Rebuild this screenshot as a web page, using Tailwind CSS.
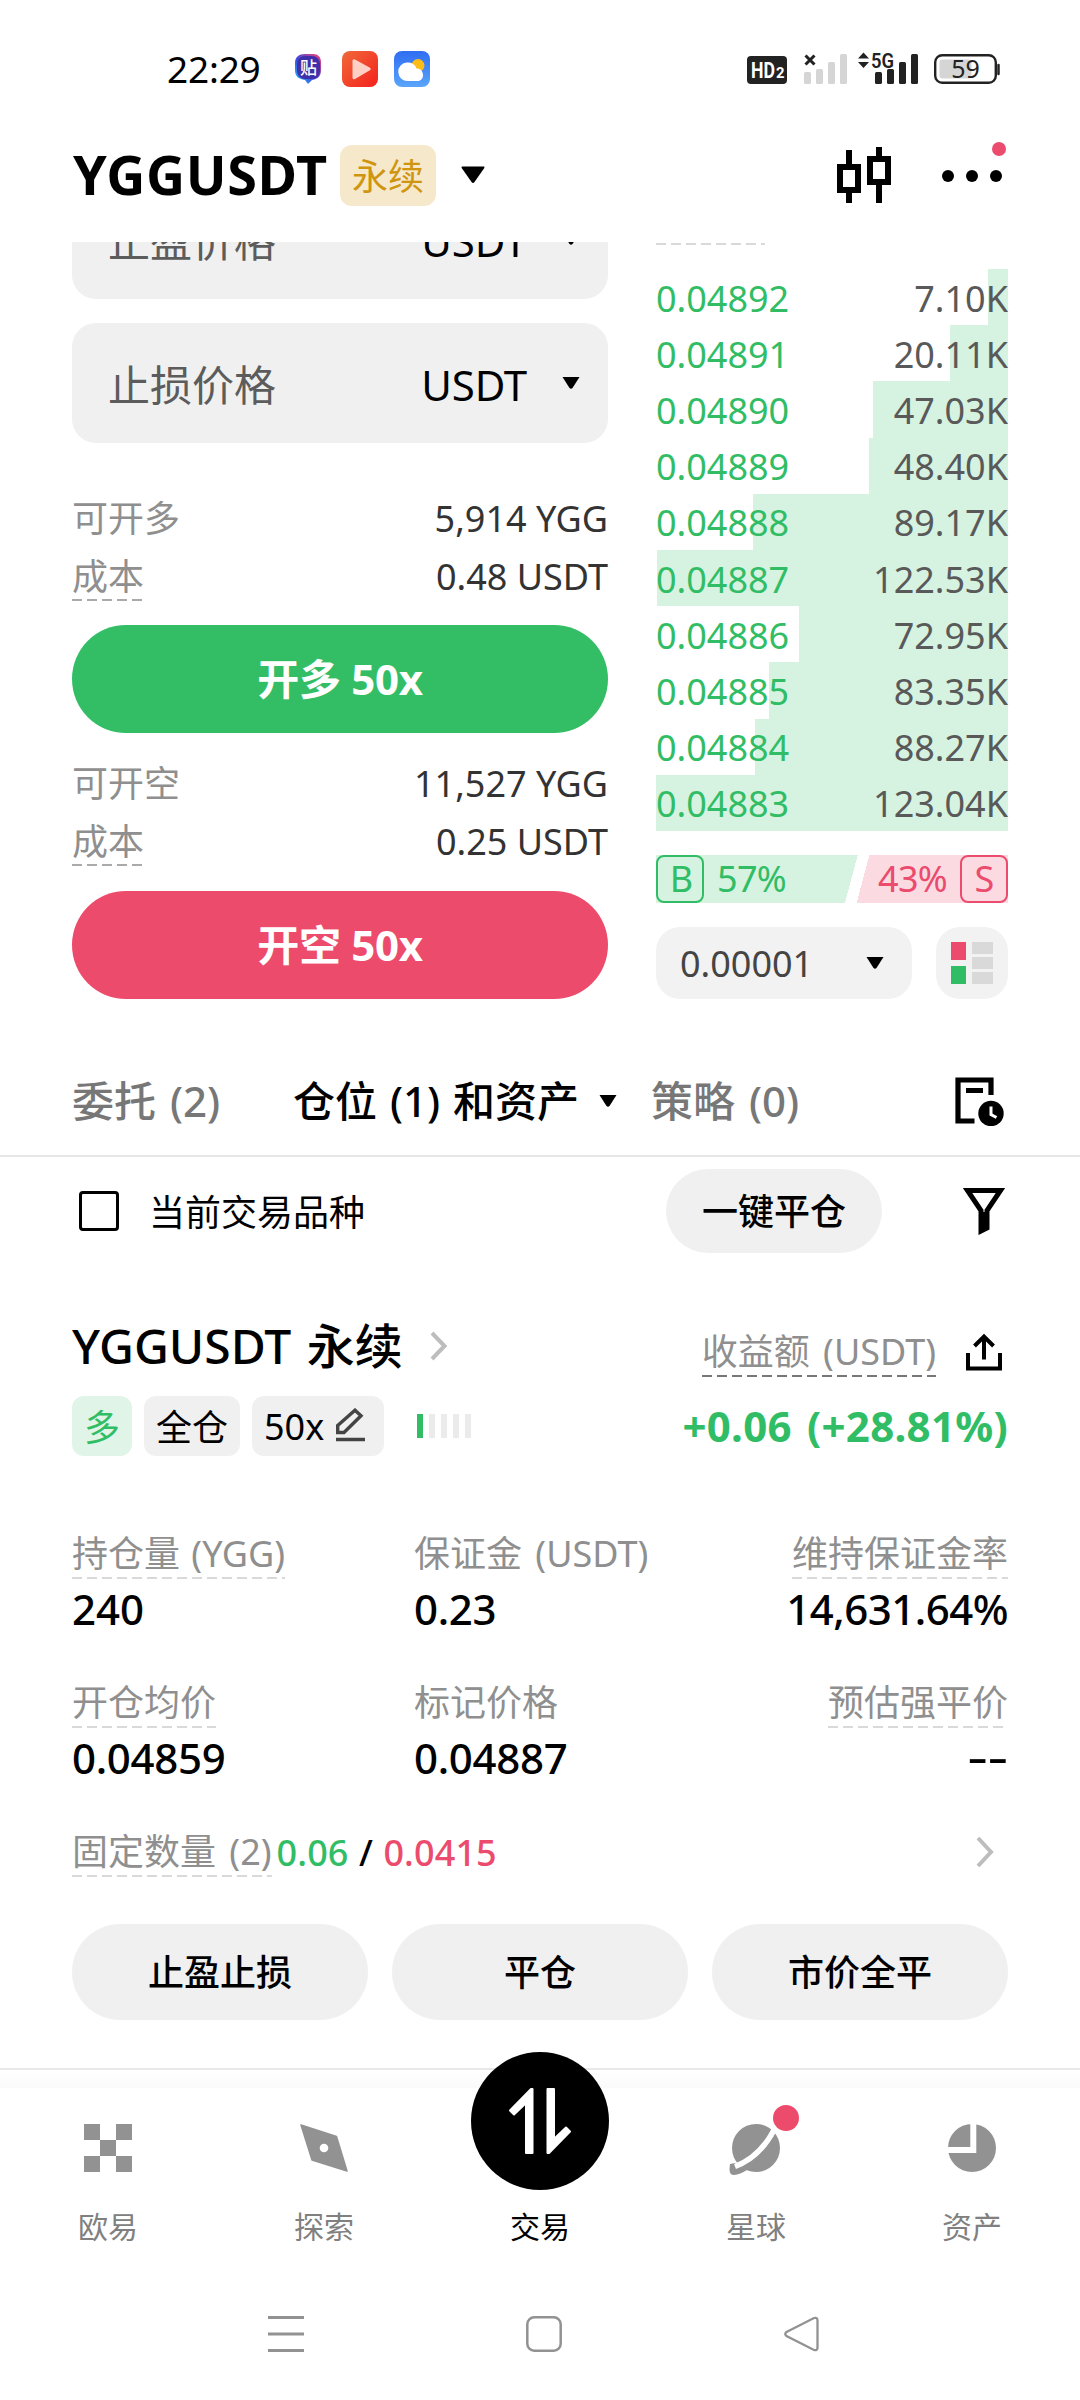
<!DOCTYPE html>
<html lang="zh-CN">
<head>
<meta charset="utf-8">
<title>YGGUSDT 永续</title>
<script src="https://cdn.jsdelivr.net/npm/@tailwindcss/browser@4"></script>
</head>
<body class="bg-white">
<div class="relative flex h-[2400px] w-[1080px] flex-col overflow-hidden bg-white font-['Noto_Sans','Noto_Sans_CJK_SC',sans-serif] text-[36px] leading-[50px] text-black">

  <!-- Status bar -->
  <header class="flex h-[108px] shrink-0 items-center pt-[30px] pr-[79px] pl-[167px]">
    <span class="w-[127px] text-[37px] tracking-[-0.2px]">22:29</span>
    <svg class="h-9 w-[138px]" viewBox="0 0 138 36">
      <defs>
        <linearGradient id="play" x1="0" y1="0" x2="1" y2="1"><stop offset="0" stop-color="#f06a3a"/><stop offset="1" stop-color="#f4201c"/></linearGradient>
        <linearGradient id="sky" x1="0" y1="0" x2="0" y2="1"><stop offset="0" stop-color="#2f6df2"/><stop offset="1" stop-color="#5aa5fb"/></linearGradient>
        <linearGradient id="tie" x1="0" y1="1" x2="1" y2="0"><stop offset="0" stop-color="#22c8ff"/><stop offset=".45" stop-color="#3b4be0"/><stop offset="1" stop-color="#ff3d6e"/></linearGradient>
      </defs>
      <path d="M11 3h8c5 0 8 3 8 8v8c0 6-3 9-9 10l-4 4-3-4C4 28 1 25 1 19v-7c0-6 4-9 10-9z" fill="url(#tie)"/>
      <rect x="3" y="5" width="23" height="23" rx="8" fill="#3f2fa8"/>
      <text x="14.500" y="23" font-size="17" font-weight="500" text-anchor="middle" fill="#fff" font-family="Noto Sans CJK SC, sans-serif">贴</text>
      <rect x="48" width="36" height="36" rx="8" fill="url(#play)"/>
      <path d="M58.500 9.500q.5-2 2.500-1l14.500 8q2.500 1.500 0 3L61 28q-2 1-2.500-1z" fill="#ffd0c4"/>
      <rect x="100" width="36" height="36" rx="8" fill="url(#sky)"/>
      <circle cx="124" cy="14.500" r="6.500" fill="#fdbd18"/>
      <path d="M114 30a9 9 0 0 1-1-18.500 9 9 0 0 1 9.500 6 6.500 6.500 0 0 1 2.500 12.500z" fill="#fff"/>
    </svg>
    <div class="grow"></div>
    <svg class="h-9 w-[255px]" viewBox="0 0 255 36" font-family="Roboto, sans-serif" fill="#222">
      <rect x="1" y="5" width="40" height="28" rx="4"/>
      <text x="5" y="27" font-size="22" font-weight="700" fill="#fff" textLength="24" lengthAdjust="spacingAndGlyphs">HD</text>
      <text x="30" y="27" font-size="14" font-weight="700" fill="#fff" textLength="8.500" lengthAdjust="spacingAndGlyphs">2</text>
      <path d="M59.500 4.500l9 9m0-9l-9 9" stroke="#222" stroke-width="3" fill="none"/>
      <g fill="#d5d5d5"><rect x="58" y="21" width="7" height="12" rx="1.500"/><rect x="70" y="18" width="7" height="15" rx="1.500"/><rect x="82" y="11" width="7" height="22" rx="1.500"/><rect x="94" y="3" width="7" height="30" rx="1.500"/></g>
      <path d="M112 7.500l5.500-6 5.500 6zM112 11l5.500 6 5.500-6z"/>
      <text x="125" y="16.500" font-size="21" font-weight="600" textLength="23" lengthAdjust="spacingAndGlyphs">5G</text>
      <rect x="129" y="21" width="7" height="12" rx="1.500"/><rect x="141" y="18" width="7" height="15" rx="1.500"/><rect x="153" y="11" width="7" height="22" rx="1.500"/><rect x="165" y="3" width="7" height="30" rx="1.500"/>
      <rect x="193.500" y="8.500" width="32" height="19" rx="3" fill="#d5d5d5"/>
      <rect x="189.200" y="4.200" width="60.600" height="27.600" rx="7" fill="none" stroke="#222" stroke-width="2.400"/>
      <path d="M252.500 14v9" stroke="#222" stroke-width="2.500" stroke-linecap="round"/>
      <text x="219.500" y="27" font-size="25" text-anchor="middle" font-family="Noto Sans, sans-serif">59</text>
    </svg>
  </header>

  <!-- Instrument header -->
  <div class="flex h-[134px] shrink-0 items-center pr-[71px] pl-[73px]">
    <h1 class="mb-[3px] w-[267px] text-[54px] leading-[60px] font-bold tracking-[0.600px] whitespace-nowrap">YGGUSDT</h1>
    <span class="flex h-[61px] w-24 items-center justify-center rounded-xl bg-[#f6e8cb] pt-[3px] text-[#cf950f]">永续</span>
    <svg class="ml-[25px] h-[18px] w-6" viewBox="0 0 24 18"><path d="M1.500.5h21q1.500 0 .8 1.400L13.500 16q-1.500 2-3 0L.7 1.900Q0 .5 1.500.5z"/></svg>
    <div class="grow"></div>
    <svg class="mb-0.5 h-[58px] w-14" viewBox="0 0 56 58"><g fill="none" stroke="#000" stroke-width="6"><rect x="4" y="22" width="18" height="23"/><path d="M13 5v17M13 45v13"/><rect x="34" y="14" width="18" height="23"/><path d="M43 2v12M43 37v21"/></g></svg>
    <svg class="ml-[49px] h-[68px] w-[68px]" viewBox="0 0 68 68"><circle cx="7" cy="35" r="6"/><circle cx="31" cy="35" r="6"/><circle cx="55" cy="35" r="6"/><circle cx="58" cy="8" r="7" fill="#eb4b6d"/></svg>
  </div>

  <!-- Order form and order book -->
  <section class="flex h-[803px] shrink-0 justify-between overflow-hidden px-[72px]">
    <div class="-mt-[63px] flex w-[536px] flex-col">
      <div class="flex h-[120px] shrink-0 items-center rounded-3xl bg-[#f0f0f0] pt-[3px] pr-7 pl-9 text-[42px]">
        <span class="grow text-[#5c5c5c]">止盈价格</span><span class="tracking-[-0.200px]">USDT</span>
        <svg class="mb-[3px] ml-[35px] h-3 w-[18px]" viewBox="0 0 18 12"><path d="M.5 0h17l-7 11q-1.500 1.500-3 0z"/></svg>
      </div>
      <div class="mt-6 flex h-[120px] shrink-0 items-center rounded-3xl bg-[#f0f0f0] pt-[3px] pr-7 pl-9 text-[42px]">
        <span class="grow text-[#5c5c5c]">止损价格</span><span class="tracking-[-0.200px]">USDT</span>
        <svg class="mb-[3px] ml-[35px] h-3 w-[18px]" viewBox="0 0 18 12"><path d="M.5 0h17l-7 11q-1.500 1.500-3 0z"/></svg>
      </div>
      <div class="mt-[46px] flex h-[58px] items-center justify-between pt-0.5"><span class="text-[#8f8f8f]">可开多</span><span class="text-[#333]">5,914 YGG</span></div>
      <div class="flex h-[58px] items-center justify-between pt-0.5"><span class="bg-[repeating-linear-gradient(to_right,#aaa_0_10px,transparent_10px_15px)] bg-[length:100%_2px] bg-[position:0_47px] bg-no-repeat text-[#8f8f8f]">成本</span><span class="text-[#333]">0.48 USDT</span></div>
      <button class="mt-5 h-[108px] shrink-0 rounded-full bg-[#33be66] text-[42px] font-bold tracking-[-0.300px] text-white">开多 50x</button>
      <div class="mt-[21px] flex h-[58px] items-center justify-between pt-0.5"><span class="text-[#8f8f8f]">可开空</span><span class="text-[#333]">11,527 YGG</span></div>
      <div class="flex h-[58px] items-center justify-between pt-0.5"><span class="bg-[repeating-linear-gradient(to_right,#aaa_0_10px,transparent_10px_15px)] bg-[length:100%_2px] bg-[position:0_47px] bg-no-repeat text-[#8f8f8f]">成本</span><span class="text-[#333]">0.25 USDT</span></div>
      <button class="mt-[21px] h-[108px] shrink-0 rounded-full bg-[#ed4b6b] text-[42px] font-bold tracking-[-0.300px] text-white">开空 50x</button>
    </div>

    <div class="flex w-[352px] flex-col">
      <div class="mt-[1px] h-[2px] w-[109px] bg-[repeating-linear-gradient(to_right,#d9d9d9_0_10px,transparent_10px_15px)]"></div>
      <div id="book" class="mt-6 grid h-[562px] grid-rows-10"></div>
      <div class="mt-6 flex h-12 items-center justify-between bg-[linear-gradient(105deg,#d6f2e1_0_55.300%,white_55.300%_58.500%,#fbdae1_58.500%)]">
        <div class="flex items-center tracking-[-0.700px] text-[#31bd65]"><span class="mr-[13px] flex size-12 items-center justify-center rounded-lg border-[2.500px] border-[#31bd65] pl-0.5">B</span>57%</div>
        <div class="flex items-center tracking-[-0.700px] text-[#eb4b6d]">43%<span class="ml-[13px] flex size-12 items-center justify-center rounded-lg border-[2.500px] border-[#eb4b6d]">S</span></div>
      </div>
      <div class="mt-6 flex justify-between">
        <div class="flex h-[72px] w-64 items-center justify-between rounded-3xl bg-[#f2f2f2] pt-0.5 pr-7 pl-6 text-[#444]">0.00001
          <svg class="mb-0.5 h-3 w-[18px]" viewBox="0 0 18 12"><path d="M.5 0h17l-7 11q-1.500 1.500-3 0z" fill="#000"/></svg>
        </div>
        <div class="flex size-[72px] items-center justify-center rounded-3xl bg-[#f2f2f2]">
          <svg class="h-[42px] w-[42px]" viewBox="0 0 42 42"><path d="M0 0h15v18H0z" fill="#eb4b6d"/><path d="M0 24h15v18H0z" fill="#31bd65"/><path d="M21 0h21v12H21zM21 15h21v12H21zM21 30h21v12H21z" fill="#d9d9d9"/></svg>
        </div>
      </div>
    </div>
  </section>

  <!-- Tabs -->
  <nav class="flex h-28 shrink-0 items-center border-b-2 border-[#e6e6e6] pt-0.5 pr-[76px] pl-[72px] text-[42px] font-medium whitespace-nowrap text-[#777]">
    <span class="w-[221px] [word-spacing:3px]">委托 (2)</span>
    <span class="w-[306px] text-black [word-spacing:2px]">仓位 (1) 和资产</span>
    <svg class="h-3 w-[18px] shrink-0" viewBox="0 0 18 12"><path d="M.5 0h17l-7 11q-1.500 1.500-3 0z"/></svg>
    <span class="ml-[34px] grow [word-spacing:3px]">策略 (0)</span>
    <svg class="h-[49px] w-[49px] shrink-0" viewBox="0 0 49 49"><path d="M19.500 44H3V3h33v15" fill="none" stroke="#000" stroke-width="5.200"/><path d="M11 13.500h17" stroke="#000" stroke-width="5"/><circle cx="36" cy="36.500" r="12.700"/><path d="M36 29.500v8l5.500 3" fill="none" stroke="#fff" stroke-width="3"/></svg>
  </nav>

  <!-- Filters -->
  <div class="flex h-[108px] shrink-0 items-center pr-[75px] pl-[79px]">
    <span class="size-10 rounded-[4px] border-[3px] border-black"></span>
    <span class="ml-[30px] grow pt-[3px]">当前交易品种</span>
    <button class="h-[84px] w-[216px] rounded-full bg-[#f0f0f0] pt-px font-medium">一键平仓</button>
    <svg class="ml-[81px] h-12 w-[42px]" viewBox="0 0 42 48"><path d="M4.500 3.500h33L24 23.500v17.500l-6 3V23.500z" fill="none" stroke="#000" stroke-width="5"/><path d="M18 25h6v15l-6 3z"/></svg>
  </div>

  <!-- Position -->
  <section class="flex shrink-0 flex-col px-[72px] pt-[51px]">
    <div class="flex justify-between">
      <div class="flex flex-col">
        <div class="flex h-[60px] items-center"><h2 class="w-[358px] text-[48px] leading-[60px] font-medium whitespace-nowrap [word-spacing:3px]">YGGUSDT 永续</h2>
          <svg class="h-[30px] w-5" viewBox="0 0 20 30"><path d="M2 2l12.500 13L2 28" fill="none" stroke="#bdbdbd" stroke-width="4"/></svg></div>
        <div class="mt-5 flex items-center gap-3">
          <span class="flex h-[60px] w-[60px] items-center justify-center rounded-xl bg-[#e0f5e8] pt-[3px] text-[#31bd65]">多</span>
          <span class="flex h-[60px] w-24 items-center justify-center rounded-xl bg-[#f0f0f0] pt-[3px]">全仓</span>
          <span class="flex h-[60px] w-[132px] items-center rounded-xl bg-[#f0f0f0] pt-0.5 pl-3">50x
            <svg class="mb-1 ml-3 h-[34px] w-[30px]" viewBox="0 0 30 34"><path d="M1.700 24.500v-7L19 2.200l6 5.500L8 24.500z" fill="none" stroke="#444" stroke-width="3.400"/><path d="M0 31.500h29" stroke="#444" stroke-width="3.500"/></svg>
          </span>
          <div class="ml-[21px] flex gap-1.5"><i class="h-6 w-1.5 bg-[#31bd65]"></i><i class="h-6 w-1.5 bg-[#ebebeb]"></i><i class="h-6 w-1.5 bg-[#ebebeb]"></i><i class="h-6 w-1.5 bg-[#ebebeb]"></i><i class="h-6 w-1.5 bg-[#ebebeb]"></i></div>
        </div>
      </div>
      <div class="flex flex-col items-end pt-[11px]">
        <div class="flex items-center pr-[6px]"><span class="bg-[repeating-linear-gradient(to_right,#777_0_10px,transparent_10px_15px)] bg-[length:100%_2px] bg-bottom bg-no-repeat text-[#8f8f8f] [word-spacing:4px]">收益额 (USDT)</span>
          <svg class="ml-[30px] h-[38px] w-9" viewBox="0 0 36 38"><path d="M2 20v15.500h32V20M18 26.500V3M8.500 13L18 3.500l9.500 9.500" fill="none" stroke="#000" stroke-width="4"/></svg></div>
        <div class="mt-6 text-[42px] font-bold tracking-[0.300px] text-[#31bd65] [word-spacing:4px]">+0.06 (+28.81%)</div>
      </div>
    </div>

    <div class="mt-[73px] grid grid-cols-[342px_1fr_auto] gap-y-[44px]">
      <div class="flex flex-col items-start gap-[5px]"><span class="bg-[repeating-linear-gradient(to_right,#d9d9d9_0_10px,transparent_10px_15px)] bg-[length:100%_2px] bg-bottom bg-no-repeat text-[#8f8f8f] [word-spacing:2px]">持仓量 (YGG)</span><b class="text-[42px] font-medium">240</b></div>
      <div class="flex flex-col items-start gap-[5px]"><span class="text-[#8f8f8f] [word-spacing:4px]">保证金 (USDT)</span><b class="text-[42px] font-medium tracking-[-0.300px]">0.23</b></div>
      <div class="flex flex-col items-end gap-[5px]"><span class="bg-[repeating-linear-gradient(to_right,#d9d9d9_0_10px,transparent_10px_15px)] bg-[length:100%_2px] bg-bottom bg-no-repeat text-[#8f8f8f]">维持保证金率</span><b class="text-[42px] font-medium tracking-[-0.500px]">14,631.64%</b></div>
      <div class="flex flex-col items-start gap-[5px]"><span class="bg-[repeating-linear-gradient(to_right,#d9d9d9_0_10px,transparent_10px_15px)] bg-[length:100%_2px] bg-bottom bg-no-repeat text-[#8f8f8f]">开仓均价</span><b class="text-[42px] font-medium tracking-[-0.300px]">0.04859</b></div>
      <div class="flex flex-col items-start gap-[5px]"><span class="text-[#8f8f8f]">标记价格</span><b class="text-[42px] font-medium tracking-[-0.300px]">0.04887</b></div>
      <div class="flex flex-col items-end gap-[5px]"><span class="bg-[repeating-linear-gradient(to_right,#d9d9d9_0_10px,transparent_10px_15px)] bg-[length:100%_2px] bg-bottom bg-no-repeat text-[#8f8f8f]">预估强平价</span><b class="-mt-0.5 origin-right scale-x-150 text-[42px] font-medium">--</b></div>
    </div>

    <div class="mt-[43px] flex items-center">
      <span class="bg-[repeating-linear-gradient(to_right,#d9d9d9_0_10px,transparent_10px_15px)] bg-[length:100%_2px] bg-bottom bg-no-repeat text-[#8f8f8f] [word-spacing:4px]">固定数量 (2)</span>
      <span class="ml-[5px] grow pt-0.5 font-medium tracking-[0.100px] [word-spacing:1px]"><span class="text-[#31bd65]">0.06</span> / <span class="text-[#eb4b6d]">0.0415</span></span>
      <svg class="mr-[13px] h-8 w-5" viewBox="0 0 20 32"><path d="M3 2l13 14L3 30" fill="none" stroke="#bdbdbd" stroke-width="4"/></svg>
    </div>

    <div class="mt-[46px] grid grid-cols-3 gap-6 font-medium">
      <button class="h-24 rounded-full bg-[#f0f0f0] pt-0.5">止盈止损</button>
      <button class="h-24 rounded-full bg-[#f0f0f0] pt-0.5">平仓</button>
      <button class="h-24 rounded-full bg-[#f0f0f0] pt-0.5">市价全平</button>
    </div>
  </section>
  <div class="mt-12 h-5 shrink-0 border-t-2 border-[#e8e8e8] bg-linear-to-b from-white to-[#fafafa]"></div>

  <!-- Bottom navigation -->
  <nav class="relative flex shrink-0 text-[30px] leading-[44px] text-[#808080]">
    <a class="flex w-[216px] flex-col items-center pt-9"><svg class="size-12" viewBox="0 0 48 48" fill="#929292"><path d="M0 0h16v16H0zM32 0h16v16H32zM16 16h16v16H16zM0 32h16v16H0zM32 32h16v16H32z"/></svg><span class="mt-[33px]">欧易</span></a>
    <a class="flex w-[216px] flex-col items-center pt-9"><svg class="size-12" viewBox="0 0 48 48"><path d="M1 1l35.500 11.500L47 47 12 36z" fill="#929292" stroke="#929292" stroke-width="1.500" stroke-linejoin="round"/><circle cx="24" cy="24" r="4.300" fill="#fff"/></svg><span class="mt-[33px]">探索</span></a>
    <a class="flex w-[216px] flex-col items-center pt-[117px] text-black"><span>交易</span></a>
    <a class="flex w-[216px] flex-col items-center pt-9"><svg class="size-12 overflow-visible" viewBox="0 0 48 48"><circle cx="24" cy="24" r="24" fill="#929292"/><path d="M-2 40q-2 12 4 11 6-.5 13-5L3 39z" fill="#929292"/><path d="M3 42.500C18 37 32 25 42 6" fill="none" stroke="#fff" stroke-width="5.500"/><circle cx="54" cy="-6" r="16" fill="#fff"/><circle cx="54" cy="-6" r="13" fill="#ed4b6b"/></svg><span class="mt-[33px]">星球</span></a>
    <a class="flex w-[216px] flex-col items-center pt-9"><svg class="size-12" viewBox="0 0 48 48"><circle cx="24" cy="24" r="24" fill="#929292"/><path d="M25.300-1v27H-1" fill="none" stroke="#fff" stroke-width="6"/></svg><span class="mt-[33px]">资产</span></a>
    <svg class="absolute -top-9 left-[471px] size-[138px]" viewBox="0 0 138 138"><circle cx="69" cy="69" r="69"/><path d="M60 37h1.500v64h-6.500V51L43 62.500 39 58.500zM78 101h-1.500V37h6.500V87L95 75.500 99 79.500z" fill="#fff" stroke="#fff" stroke-width="2" stroke-linejoin="round"/></svg>
  </nav>

  <!-- System navigation -->
  <div class="mt-[67px] flex shrink-0 items-center pl-[268px]">
    <svg class="h-9 w-9" viewBox="0 0 36 36"><path d="M0 1.500h36M0 18h36M0 34.500h36" stroke="#929292" stroke-width="3"/></svg>
    <svg class="ml-[222px] h-9 w-9" viewBox="0 0 36 36"><rect x="1.300" y="1.300" width="33.400" height="33.400" rx="7" fill="none" stroke="#929292" stroke-width="2.500"/></svg>
    <svg class="ml-[222px] h-9 w-9" viewBox="0 0 36 36"><path d="M2.500 16L30 2q3.500-1 3.500 2.500v27q0 3.500-3.500 2.500L2.500 20q-2.500-2 0-4z" fill="none" stroke="#929292" stroke-width="2.300"/></svg>
  </div>
</div>

<script>
  const bids = [
    ["0.04892", "7.10K", 20], ["0.04891", "20.11K", 58], ["0.04890", "47.03K", 135],
    ["0.04889", "48.40K", 139], ["0.04888", "89.17K", 255], ["0.04887", "122.53K", 351],
    ["0.04886", "72.95K", 209], ["0.04885", "83.35K", 239], ["0.04884", "88.27K", 253],
    ["0.04883", "123.04K", 352]
  ];
  document.getElementById("book").innerHTML = bids.map(([price, size, depth]) =>
    `<div class="relative flex items-center justify-between pt-[3px]">
      <div class="absolute inset-y-0 right-0 bg-[#d6f2e1]" style="width:${depth}px"></div>
      <span class="relative text-[#31bd65]">${price}</span><span class="relative text-[#595959]">${size}</span>
    </div>`).join("");
</script>
</body>
</html>
